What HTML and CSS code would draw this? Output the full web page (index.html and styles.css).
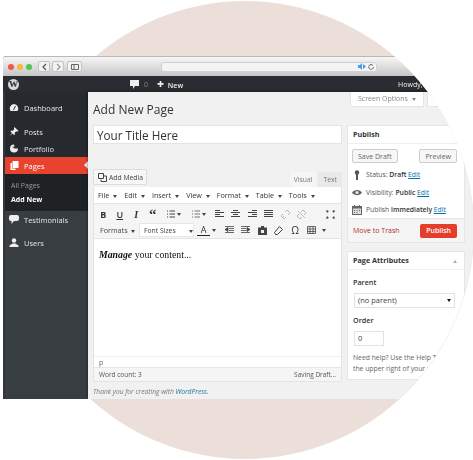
FILE: index.html
```html
<!DOCTYPE html>
<html>
<head>
    <title>Add New Page</title>
    <link rel="stylesheet" href="styles.css">
</head>
<body>
    <div class="circle"></div>
    <div class="window">
        <div class="chrome">
            <span class="light red"></span><span class="light yellow"></span><span class="light green"></span>
            <div class="navButtons">
                <span class="navBtn"><svg width="5" height="8" viewBox="0 0 5 8"><path d="M4 1 1 4l3 3" fill="none" stroke="#555" stroke-width="1.2"/></svg></span>
                <span class="navBtn"><svg width="5" height="8" viewBox="0 0 5 8"><path d="M1 1l3 3-3 3" fill="none" stroke="#999" stroke-width="1.2"/></svg></span>
            </div>
            <span class="navBtn sidebarBtn"><svg width="8" height="6" viewBox="0 0 8 6"><path d="M.5.5h7v5h-7zM3 .5v5" fill="none" stroke="#666"/></svg></span>
            <div class="urlBar">
                <svg width="8" height="7" viewBox="0 0 8 7"><path d="M0 2h2l2-2v7L2 5H0zM5 1l3 2.500L5 6z" fill="#4a9be8"/></svg>
                <svg width="6" height="6" viewBox="0 0 6 6"><path d="M5 1.500A2.400 2.400 0 1 0 5.500 3" fill="none" stroke="#666"/></svg>
            </div>
        </div>

        <div class="adminBar">
            <span class="wpLogo">W</span>
            <span class="barComment">
                <svg width="9" height="9" viewBox="0 0 9 9"><path d="M0 0h9v6H5L3 9V6H0z" fill="#eee"/></svg>
                <span class="zero">0</span>
            </span>
            <span class="barNew"><b class="plus">+</b> New</span>
            <span class="howdy">Howdy, admin</span>
        </div>

        <div class="adminBody">
            <div class="sidebar">
                <div class="menuItem dashboard">
                    <svg width="9" height="9" viewBox="0 0 9 9"><path d="M4.500 1A4.500 4.500 0 0 0 1 8h7A4.500 4.500 0 0 0 4.500 1z" fill="#eee"/><path d="M4 7l2-4" stroke="#32373c"/></svg>
                    Dashboard
                </div>
                <div class="menuItem posts">
                    <svg width="9" height="9" viewBox="0 0 9 9"><path d="M5 0l4 4-1 .5-1.500 0L5 6l.5 1.500-1 .5L3 6.500 0 9l2.500-3L1 4.500l.5-1L3 4l1.500-1.500V1z" fill="#eee"/></svg>
                    Posts
                </div>
                <div class="menuItem portfolio">
                    <svg width="9" height="9" viewBox="0 0 9 9"><path d="M4.500.5a4 4 0 1 0 4 4H5L2.500 2.500 5 3z" fill="#eee"/></svg>
                    Portfolio
                </div>
                <div class="menuItem current">
                    <svg width="9" height="9" viewBox="0 0 9 9"><path d="M3 0h6v7H3z" fill="#fff"/><path d="M1 2h1.500v5.500H6V9H1z" fill="#fff"/></svg>
                    Pages
                    <span class="pointer"></span>
                </div>
                <div class="subMenu">
                    <div class="subItem">All Pages</div>
                    <div class="subItem active">Add New</div>
                </div>
                <div class="menuItem testimonials">
                    <svg width="10" height="10" viewBox="0 0 10 10"><path d="M2 0h6a2 2 0 0 1 2 2v2a2 2 0 0 1-2 2H5L2.500 9V6H2a2 2 0 0 1-2-2V2a2 2 0 0 1 2-2z" fill="#eee"/></svg>
                    Testimonials
                </div>
                <div class="menuItem users">
                    <svg width="9" height="9" viewBox="0 0 9 9"><circle cx="4.500" cy="2.500" r="2.200" fill="#eee"/><path d="M0 9V7.500L3 5.500h3l3 2V9z" fill="#eee"/></svg>
                    Users
                </div>
            </div>

            <div class="main">
                <div class="screenTabs">
                    <span class="screenTab">Screen Options <i class="caret"></i></span>
                    <span class="screenTab">Help</span>
                </div>
                <h1 class="pageTitle">Add New Page</h1>
                <div class="columns">
                    <div class="leftCol">
                        <div class="titleInput">Your Title Here</div>
                        <div class="editorHead">
                            <span class="addMedia">
                                <svg width="9" height="9" viewBox="0 0 9 9"><path d="M.5.5h5v5h-5z" fill="none" stroke="#444"/><path d="M6 3h2.500v5.500H3V6.500" fill="none" stroke="#444"/></svg>
                                Add Media
                            </span>
                            <div class="tabs">
                                <span class="tab on">Visual</span>
                                <span class="tab">Text</span>
                            </div>
                        </div>

                        <div class="editor">
                            <div class="menuBar">
                                <span>File <i class="caret dark"></i></span>
                                <span>Edit <i class="caret dark"></i></span>
                                <span>Insert <i class="caret dark"></i></span>
                                <span>View <i class="caret dark"></i></span>
                                <span>Format <i class="caret dark"></i></span>
                                <span>Table <i class="caret dark"></i></span>
                                <span>Tools <i class="caret dark"></i></span>
                            </div>
                            <div class="toolbars">
                                <div class="toolRow">
                                    <span class="tool bold">B</span>
                                    <span class="tool under">U</span>
                                    <span class="tool ital">I</span>
                                    <span class="tool quote">&#8220;</span>
                                    <span class="tool wide">
                                        <svg width="8" height="8" viewBox="0 0 8 8"><path d="M0 1h1M0 4h1M0 7h1M2.500 1H8M2.500 4H8M2.500 7H8" stroke="#444"/></svg>
                                        <i class="caret dark"></i>
                                    </span>
                                    <span class="tool wide">
                                        <svg width="8" height="8" viewBox="0 0 8 8"><path d="M0 1h1M0 4h1M0 7h1M2.500 1H8M2.500 4H8M2.500 7H8" stroke="#777"/></svg>
                                        <i class="caret dark"></i>
                                    </span>
                                    <span class="tool"><svg width="9" height="8" viewBox="0 0 9 8"><path d="M0 .5h5M0 2.500h9M0 4.500h5M0 6.500h9" stroke="#444"/></svg></span>
                                    <span class="tool"><svg width="9" height="8" viewBox="0 0 9 8"><path d="M2 .5h5M0 2.500h9M2 4.500h5M0 6.500h9" stroke="#444"/></svg></span>
                                    <span class="tool"><svg width="9" height="8" viewBox="0 0 9 8"><path d="M4 .5h5M0 2.500h9M4 4.500h5M0 6.500h9" stroke="#444"/></svg></span>
                                    <span class="tool"><svg width="9" height="8" viewBox="0 0 9 8"><path d="M0 .5h9M0 2.500h9M0 4.500h9M0 6.500h9" stroke="#444"/></svg></span>
                                    <span class="tool"><svg width="9" height="9" viewBox="0 0 9 9"><path d="M1 8l2-2M4 2l2-2 3 3-2 2M5 7L3 9 0 6l2-2" fill="none" stroke="#bbb"/></svg></span>
                                    <span class="tool"><svg width="9" height="9" viewBox="0 0 9 9"><path d="M4 2l2-2 3 3-2 2M5 7L3 9 0 6l2-2M1 1l7 7" fill="none" stroke="#bbb"/></svg></span>
                                    <span class="tool full"><svg width="9" height="9" viewBox="0 0 9 9"><path d="M0 0l3 1-2 2zM9 0L6 1l2 2zM0 9l1-3 2 2zM9 9L8 6 6 8z" fill="#444"/></svg></span>
                                </div>
                                <div class="toolRow">
                                    <span class="formats">Formats <i class="caret dark"></i></span>
                                    <span class="fontSizes">Font Sizes <i class="caret dark"></i></span>
                                    <span class="tool colorA">A</span>
                                    <i class="caret dark"></i>
                                    <span class="tool first"><svg width="9" height="8" viewBox="0 0 9 8"><path d="M0 .5h9M4 2.500h5M4 4.500h5M0 6.500h9M3 1.500v4L0 3.500z" stroke="#444" fill="#444" stroke-width=".8"/></svg></span>
                                    <span class="tool"><svg width="9" height="8" viewBox="0 0 9 8"><path d="M0 .5h9M0 2.500h5M0 4.500h5M0 6.500h9M6 1.500v4l3-2z" stroke="#444" fill="#444" stroke-width=".8"/></svg></span>
                                    <span class="tool"><svg width="9" height="9" viewBox="0 0 9 9"><path d="M0 1.500h3V0h3v1.500h3V9H0z" fill="#444"/><path d="M3 4h3v3H3z" fill="#eee"/></svg></span>
                                    <span class="tool"><svg width="9" height="9" viewBox="0 0 9 9"><path d="M5.500.5l3 3-5 5h-2l-1-2z" fill="none" stroke="#444"/></svg></span>
                                    <span class="tool omega">&#937;</span>
                                    <span class="tool"><svg width="9" height="8" viewBox="0 0 9 8"><path d="M.5.500h8v7h-8zM3 .5v7M6 .5v7M.5 3h8M.5 5.500h8" fill="none" stroke="#444" stroke-width=".8"/></svg></span>
                                    <i class="caret dark"></i>
                                </div>
                            </div>
                            <div class="editArea"><b><i>Manage</i></b> your content...</div>
                            <div class="pathRow">p</div>
                            <div class="countRow"><span>Word count: 3</span><span>Saving Draft...</span></div>
                        </div>
                    </div>

                    <div class="rightCol">
                        <div class="box publishBox">
                            <div class="boxTitle">Publish</div>
                            <div class="draftRow">
                                <span class="btn">Save Draft</span>
                                <span class="btn">Preview</span>
                            </div>
                            <div class="metaRow">
                                <svg width="8" height="10" viewBox="0 0 8 10"><circle cx="4" cy="2.500" r="2.200" fill="#555"/><path d="M3 4h2v6H3z" fill="#555"/></svg>
                                <span>Status: <b>Draft</b> <a>Edit</a></span>
                            </div>
                            <div class="metaRow">
                                <svg width="10" height="7" viewBox="0 0 10 7"><path d="M0 3.500C2 0 8 0 10 3.500 8 7 2 7 0 3.500z" fill="#666"/><circle cx="5" cy="3.500" r="1.500" fill="#eee"/></svg>
                                <span>Visibility: <b>Public</b> <a>Edit</a></span>
                            </div>
                            <div class="metaRow">
                                <svg width="10" height="10" viewBox="0 0 10 10"><path d="M0 1h10v9H0z" fill="#666"/><path d="M1 3.500h8v5.500H1z" fill="#ddd"/><path d="M2 0h1v2H2zM7 0h1v2H7zM2 5h1v1H2zM4.500 5h1v1h-1zM7 5h1v1H7zM2 7h1v1H2zM4.500 7h1v1h-1z" fill="#666"/></svg>
                                <span>Publish <b>immediately</b> <a>Edit</a></span>
                            </div>
                            <div class="publishFoot">
                                <a class="trash">Move to Trash</a>
                                <span class="publishBtn">Publish</span>
                            </div>
                        </div>

                        <div class="box attrBox">
                            <div class="boxTitle">Page Attributes <i class="caret up"></i></div>
                            <div class="attrLabel">Parent</div>
                            <div class="selectBox">(no parent) <i class="caret black"></i></div>
                            <div class="attrLabel">Order</div>
                            <div class="orderInput">0</div>
                            <p class="helpText">Need help? Use the Help Tab in the upper right of your screen.</p>
                        </div>
                    </div>
                </div>
                <div class="thanks">Thank you for creating with <a>WordPress</a>.</div>
            </div>
        </div>
    </div>
</body>
</html>
```

FILE: styles.css
```css
html, body {
    margin: 0;
    height: 460px;
    overflow: hidden;
    background-color: white;
}

body {
    position: relative;
    font-family: 'Open Sans', sans-serif;
    color: #444;
}

.circle {
    position: absolute;
    left: 16px;
    top: 1px;
    width: 458px;
    height: 458px;
    border-radius: 50%;
    background-color: #ecdfd9;
}

.window {
    position: absolute;
    left: 3px;
    top: 56px;
    width: 470px;
    height: 343px;
    display: flex;
    flex-direction: column;
    background-color: #32373c;
    border-radius: 4px 0 0 0;
    clip-path: path('M0 0H391A229 229 0 0 1 396 343H0Z');
    filter: blur(0.4px);
    overflow: hidden;
}

/* browser bar */
.chrome {
    height: 20px;
    display: flex;
    align-items: center;
    flex-shrink: 0;
    padding-left: 5px;
    box-sizing: border-box;
    background: linear-gradient(#f6f6f6, #c6c6c6);
    border-top: 1px solid #b8b8b8;
}

.light {
    width: 6px;
    height: 6px;
    border-radius: 50%;
    margin-right: 3px;
}

.red { background-color: #f0584f; }
.yellow { background-color: #f5b83d; }
.green { background-color: #4fc74f; }

.navButtons {
    display: flex;
    gap: 2px;
    margin-left: 3px;
}

.navBtn {
    width: 10px;
    height: 9px;
    display: flex;
    align-items: center;
    justify-content: center;
    background-color: #f2f2f2;
    border: 1px solid #c4c4c4;
    border-radius: 2px;
}

.sidebarBtn {
    width: 13px;
    margin-left: 3px;
}

.urlBar {
    width: 216px;
    height: 10px;
    margin-left: 79px;
    display: flex;
    align-items: center;
    justify-content: flex-end;
    gap: 2px;
    padding-right: 2px;
    box-sizing: border-box;
    background-color: #f4f4f4;
    border: 1px solid #d2d2d2;
    border-radius: 3px;
}

/* admin bar */
.adminBar {
    height: 16px;
    display: flex;
    align-items: center;
    flex-shrink: 0;
    background-color: #292d31;
    color: #eee;
    font-size: 7px;
}

.wpLogo {
    width: 11px;
    height: 11px;
    margin-left: 5px;
    border-radius: 50%;
    background-color: #d8d8d8;
    color: #292d31;
    font: bold 9px/11px 'Liberation Serif', serif;
    text-align: center;
}

.barComment {
    display: flex;
    align-items: center;
    gap: 5px;
    margin-left: 111px;
}

.zero { color: #888; }

.barNew {
    margin-left: 9px;
    font-weight: 600;
}

.plus {
    font-size: 12px;
    line-height: 10px;
    margin-right: 2px;
}

.howdy {
    margin-left: 215px;
    white-space: nowrap;
}

.adminBody {
    flex: 1;
    display: flex;
    min-height: 0;
}

/* left menu */
.sidebar {
    width: 83px;
    margin-left: 2px;
    flex-shrink: 0;
    padding-top: 7px;
    background: linear-gradient(#26292d, #26292d 34%, #383d42 36%, #383d42);
    color: #e6e6e6;
    font-size: 7.500px;
}

.menuItem {
    position: relative;
    display: flex;
    align-items: center;
    gap: 5px;
    height: 17px;
    padding-left: 4px;
}

.menuItem svg {
    width: 10px;
}

.posts { margin-top: 7px; }
.portfolio { margin-top: 0; }

.current {
    background-color: #e8432e;
    color: white;
}

.pointer {
    position: absolute;
    right: 0;
    top: 4px;
    border: 4px solid transparent;
    border-left-width: 0;
    border-right-color: #f1f1f1;
}

.subMenu {
    height: 37px;
    padding-top: 5px;
    box-sizing: border-box;
    background-color: #1f2225;
    font-size: 7px;
    color: #9a9a9a;
}

.subItem {
    height: 14px;
    line-height: 14px;
    padding-left: 6px;
}

.active {
    color: white;
    font-weight: 700;
}

.testimonials { margin-top: 0; }
.users { margin-top: 6px; }

/* main area */
.main {
    flex: 1;
    min-width: 0;
    position: relative;
    padding: 0 0 0 5px;
    background-color: #f1f1f1;
    box-shadow: -1px -1px 2px rgba(0, 0, 0, 0.3);
}

.screenTabs {
    position: absolute;
    top: 0;
    left: 262px;
    display: flex;
    gap: 3px;
}

.screenTab {
    height: 15px;
    line-height: 14px;
    padding: 0 7px;
    background-color: white;
    border: 1px solid #e6e6e6;
    border-top: none;
    box-sizing: border-box;
    font-size: 7px;
    color: #888;
    white-space: nowrap;
}

.caret {
    display: inline-block;
    border: 2px solid transparent;
    border-top: 3px solid #888;
    border-bottom-width: 0;
    vertical-align: middle;
    margin-left: 2px;
}

.caret.dark { border-top-color: #444; }
.caret.black { border-top-color: #111; }

.caret.up {
    position: absolute;
    right: 7px;
    top: 8px;
    border-top: none;
    border-bottom: 3px solid #aaa;
}

.pageTitle {
    margin: 0;
    padding-top: 8px;
    height: 33px;
    box-sizing: border-box;
    font-size: 12px;
    line-height: 20px;
    font-weight: 400;
    color: #333;
}

.columns {
    display: flex;
    gap: 5px;
}

.leftCol {
    width: 249px;
    flex-shrink: 0;
}

.titleInput {
    height: 19px;
    line-height: 18px;
    padding-left: 3px;
    box-sizing: border-box;
    background-color: white;
    border: 1px solid #e4e4e4;
    font-size: 11.700px;
    color: #333;
}

.editorHead {
    height: 43px;
    display: flex;
    align-items: flex-end;
    justify-content: space-between;
}

.addMedia {
    height: 16px;
    margin-bottom: 2px;
    padding: 0 3px 0 4px;
    display: flex;
    align-items: center;
    gap: 2px;
    box-sizing: border-box;
    background-color: #f7f7f7;
    border: 1px solid #ddd;
    border-radius: 2px;
    font-size: 6.800px;
}

.tabs {
    display: flex;
    gap: 2px;
}

.tab {
    height: 15px;
    line-height: 15px;
    padding: 0 5px;
    background-color: #e9e9e9;
    font-size: 6.800px;
    color: #777;
}

.tab.on {
    padding: 0 4px;
    background-color: #f5f5f5;
}

.editor {
    background-color: white;
    border: 1px solid #e4e4e4;
    border-top: none;
    box-sizing: border-box;
}

.menuBar {
    height: 16px;
    display: flex;
    align-items: center;
    gap: 7px;
    padding-left: 4px;
    font-size: 7.200px;
    color: #333;
}

.toolbars {
    height: 36px;
    padding-top: 2px;
    box-sizing: border-box;
    background-color: #f5f5f5;
    border-top: 1px solid #e4e4e4;
    border-bottom: 1px solid #e4e4e4;
}

.toolRow {
    height: 16px;
    display: flex;
    align-items: center;
    padding-left: 1px;
}

.tool {
    width: 16.500px;
    height: 14px;
    flex-shrink: 0;
    display: flex;
    align-items: center;
    justify-content: center;
    font-size: 9px;
    color: #333;
}

.tool.wide { width: 25px; }
.bold { font-weight: 700; }
.under { text-decoration: underline; font-weight: 600; }
.ital { font: italic 700 10px 'Liberation Serif', serif; }
.quote { font: 700 15px/20px 'Liberation Serif', serif; }
.full { margin-left: 12px; }

.formats {
    width: 44px;
    padding-left: 5px;
    box-sizing: border-box;
    font-size: 7.200px;
    white-space: nowrap;
}

.fontSizes {
    width: 55px;
    height: 14px;
    line-height: 13px;
    padding-left: 4px;
    box-sizing: border-box;
    background-color: white;
    border: 1px solid #e6e6e6;
    font-size: 6.800px;
    white-space: nowrap;
}

.fontSizes .caret { margin-left: 12px; }

.colorA {
    width: 13px;
    margin-left: 3px;
    height: 11px;
    border-bottom: 1px solid #222;
}

.first { margin-left: 5px; }

.omega {
    font-size: 10px;
}

.editArea {
    height: 117px;
    padding: 10px 5px 0;
    box-sizing: border-box;
    font: 9.800px 'Liberation Serif', serif;
    color: #111;
}

.pathRow {
    height: 11px;
    line-height: 11px;
    padding-left: 5px;
    border-top: 1px solid #eee;
    box-sizing: border-box;
    font-size: 7px;
    color: #666;
}

.countRow {
    height: 13px;
    display: flex;
    justify-content: space-between;
    align-items: center;
    padding: 0 5px;
    background-color: #f5f5f5;
    border-top: 1px solid #e6e6e6;
    font-size: 6.500px;
    color: #555;
}

.thanks {
    margin-top: 5px;
    font-size: 6.700px;
    font-style: italic;
    color: #777;
}

.thanks a {
    color: #21759b;
}

/* right column */
.rightCol {
    width: 118px;
    flex-shrink: 0;
}

.box {
    position: relative;
    background-color: white;
    border: 1px solid #e6e6e6;
    box-sizing: border-box;
}

.publishBox {
    height: 118px;
    margin-bottom: 8px;
}

.attrBox {
    height: 129px;
}

.boxTitle {
    height: 18px;
    line-height: 17px;
    padding-left: 5px;
    border-bottom: 1px solid #eee;
    box-sizing: border-box;
    font-size: 7.200px;
    font-weight: 700;
    color: #333;
}

.draftRow {
    display: flex;
    justify-content: space-between;
    padding: 5px 7px 3px 4px;
}

.btn {
    height: 14px;
    line-height: 13px;
    padding: 0 5px;
    box-sizing: border-box;
    background-color: #f7f7f7;
    border: 1px solid #ccc;
    border-radius: 2px;
    font-size: 7px;
    color: #666;
}

.metaRow {
    display: flex;
    align-items: center;
    gap: 4px;
    height: 17.500px;
    padding-left: 4px;
    font-size: 6.800px;
    white-space: nowrap;
    color: #555;
}

.metaRow svg {
    width: 10px;
    flex-shrink: 0;
}

.metaRow b {
    color: #333;
    font-weight: 600;
}

.metaRow a {
    color: #0073aa;
    text-decoration: underline;
}

.publishFoot {
    position: absolute;
    left: 0;
    right: 0;
    bottom: 0;
    height: 23px;
    display: flex;
    align-items: center;
    justify-content: space-between;
    padding: 0 7px 0 5px;
    background-color: #f5f5f5;
    border-top: 1px solid #e6e6e6;
}

.trash {
    color: #b32d2e;
    font-size: 7px;
}

.publishBtn {
    height: 14px;
    line-height: 14px;
    padding: 0 6px;
    background-color: #e63c2a;
    border-radius: 2px;
    color: white;
    font-size: 7px;
    font-weight: 600;
}

.attrLabel {
    margin: 7px 0 5px 5px;
    height: 11px;
    line-height: 11px;
    font-size: 7.200px;
    font-weight: 600;
    color: #333;
}

.selectBox {
    position: relative;
    width: 101px;
    height: 15px;
    line-height: 13px;
    margin-left: 6px;
    padding-left: 3px;
    box-sizing: border-box;
    border: 1px solid #e2e2e2;
    font-size: 7.500px;
}

.selectBox .caret {
    position: absolute;
    right: 3px;
    top: 5px;
}

.orderInput {
    width: 30px;
    height: 15px;
    line-height: 13px;
    margin-left: 6px;
    padding-left: 3px;
    box-sizing: border-box;
    border: 1px solid #e2e2e2;
    font-size: 7.500px;
}

.helpText {
    margin: 6px 0 0 5px;
    width: 104px;
    font-size: 6.800px;
    line-height: 11px;
    color: #666;
}
```
